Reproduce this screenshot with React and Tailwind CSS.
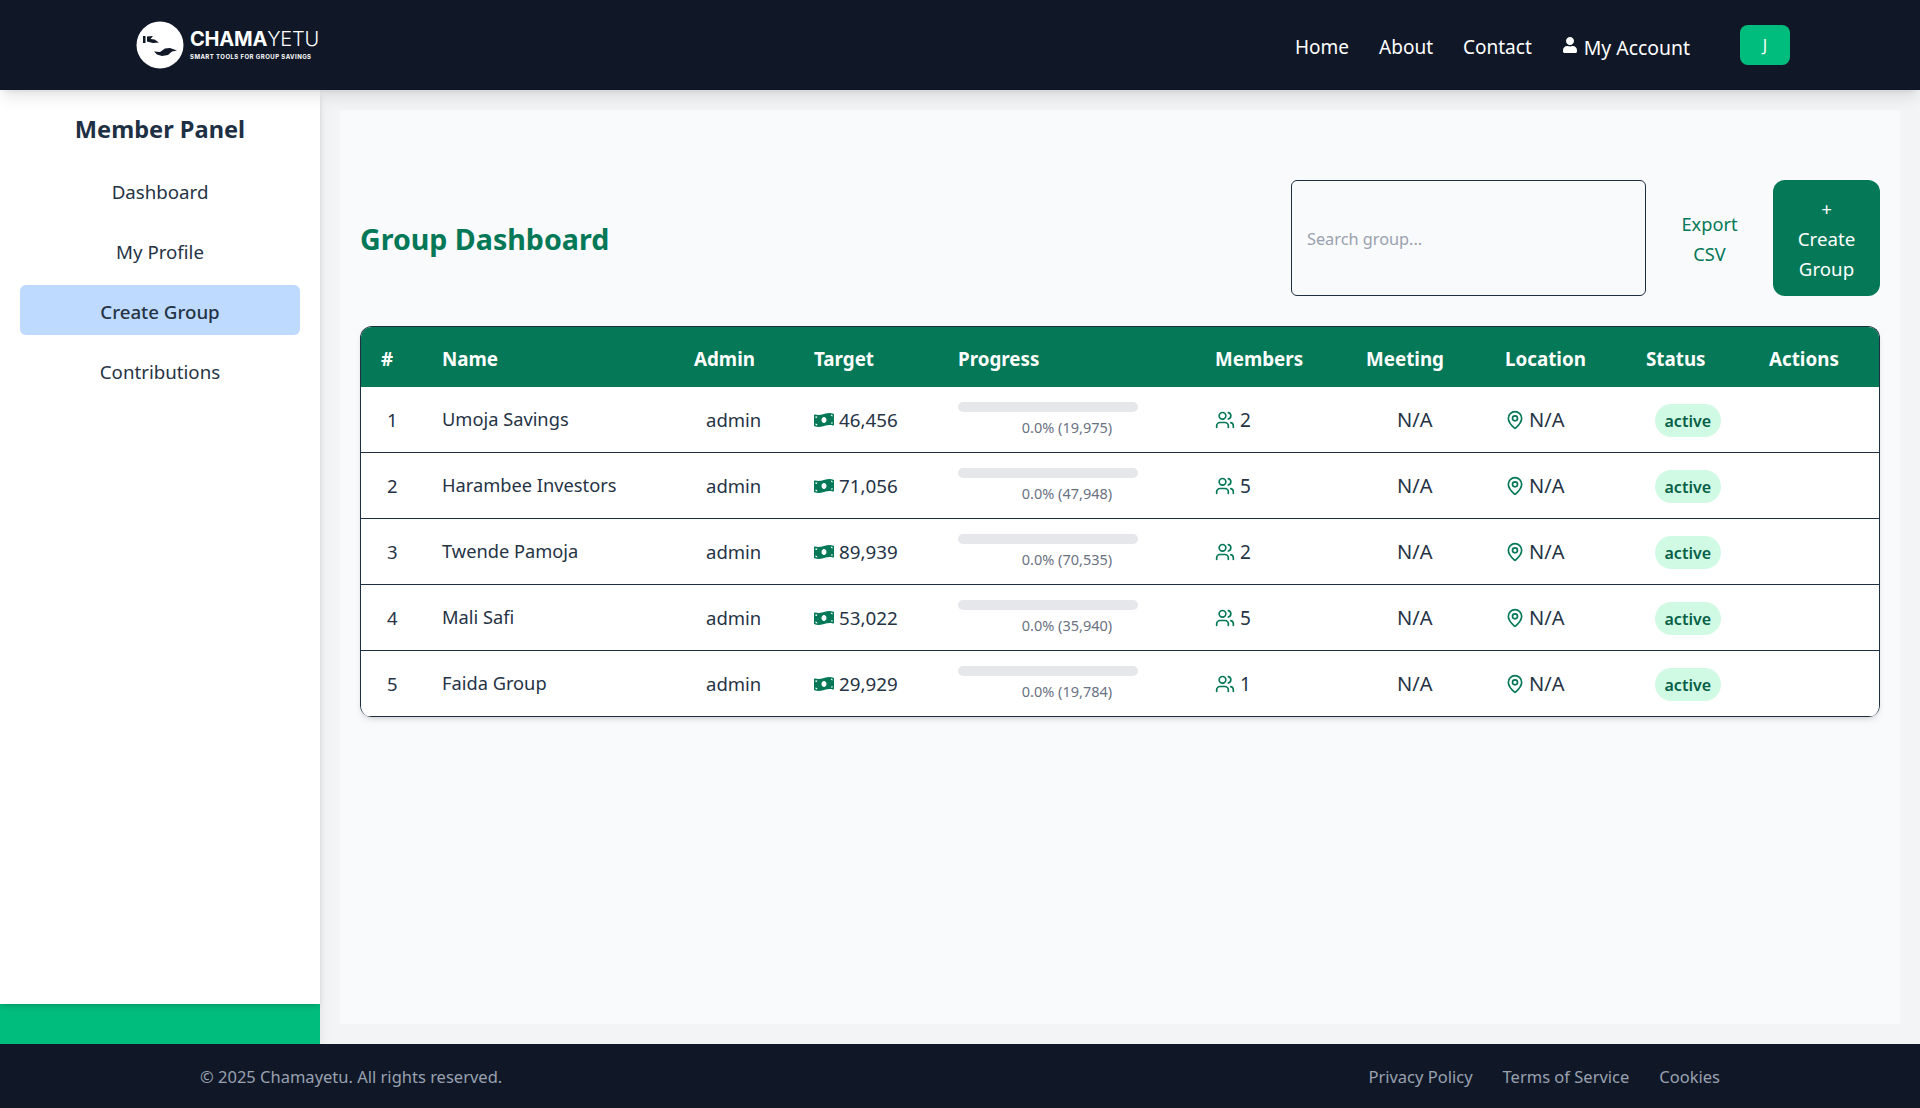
import { FaMoneyBillWave, FaUser } from "react-icons/fa";
import { LuUsers, LuMapPin } from "react-icons/lu";

const groups = [
  { id: 1, name: "Umoja Savings", target: "46,456", raised: "19,975", members: 2 },
  { id: 2, name: "Harambee Investors", target: "71,056", raised: "47,948", members: 5 },
  { id: 3, name: "Twende Pamoja", target: "89,939", raised: "70,535", members: 2 },
  { id: 4, name: "Mali Safi", target: "53,022", raised: "35,940", members: 5 },
  { id: 5, name: "Faida Group", target: "29,929", raised: "19,784", members: 1 },
];

const navLinks = ["Home", "About", "Contact"];
const sideLinks = ["Dashboard", "My Profile", "Create Group", "Contributions"];
const columns = ["#", "Name", "Admin", "Target", "Progress", "Members", "Meeting", "Location", "Status", "Actions"];
const footerLinks = ["Privacy Policy", "Terms of Service", "Cookies"];

function Logo() {
  return (
    <div className="flex items-center gap-[6px]">
      <svg className="h-12 w-12" viewBox="0 0 48 48">
        <circle cx="24" cy="24" r="23.5" fill="#fff" />
        {/* upper hand, cuff on the left */}
        <path d="M7 15h2.500v7H7z M11 15.500l6-.500-2.500 3 4 .500 4.500 3-6 .500-6-1.500z" fill="#111827" />
        {/* lower hand, open palm */}
        <path d="M18 30.500l6 .500 5-3.500 5-.500 7 2.500-5 1-4 3.500-6 1-5-1.500z" fill="#111827" />
      </svg>
      <div className="mb-[2px] flex flex-col font-['Inter',sans-serif] text-white">
        <div className="text-[20px] leading-[22px] font-bold tracking-[-0.2px]">
          CHAMA<span className="font-light">YETU</span>
        </div>
        <div className="text-[6px] leading-[8px] mt-[3px] font-bold tracking-[0.45px]">SMART TOOLS FOR GROUP SAVINGS</div>
      </div>
    </div>
  );
}

function GroupRow({ group }) {
  return (
    <tr className="h-[66px] bg-white text-[18.500px] text-[#253345] [&>td]:border-b [&>td]:border-[#1f2f42]">
      <td className="pl-[26px] pt-[1px]">{group.id}</td>
      <td className="pl-5 pb-[2px] text-[18.250px]">{group.name}</td>
      <td className="pl-[32px] pt-[1px]">admin</td>
      <td className="pl-5 pt-[1px]">
        <span className="flex items-center gap-[5px]">
          <FaMoneyBillWave className="h-[20px] w-[20px] text-[#047857]" />
          <span className="text-[18.800px]">{group.target}</span>
        </span>
      </td>
      <td className="pl-5">
        <div className="w-[218px]">
          <div className="h-[10px] w-[180px] rounded-full bg-gray-200" />
          <div className="mt-[5px] text-center text-[14.500px] leading-5 text-gray-500">0.0% ({group.raised})</div>
        </div>
      </td>
      <td className="pl-5 pt-[1px]">
        <span className="flex items-center gap-[5px]">
          <LuUsers className="h-5 w-5 text-[#047857]" />
          <span className="text-[19px]">{group.members}</span>
        </span>
      </td>
      <td className="pl-[51px] pt-[1px] text-[20px]">N/A</td>
      <td className="pl-5 pt-[1px]">
        <span className="flex items-center gap-[4px]">
          <LuMapPin className="h-5 w-5 text-[#047857]" />
          <span className="text-[20px]">N/A</span>
        </span>
      </td>
      <td className="pl-[29px] pt-[1px]">
        <span className="inline-block h-[33px] rounded-[17px] bg-[#d1fae5] px-[9.500px] text-[16px] leading-[35px] font-semibold text-[#065f46]">
          active
        </span>
      </td>
      <td />
    </tr>
  );
}

export default function App() {
  return (
    <div className="flex h-screen flex-col bg-gray-100 font-['Noto_Sans',sans-serif]">
      <header className="relative z-10 flex h-[90px] shrink-0 items-center bg-gray-900 pr-[130px] pl-[136px] shadow-lg">
        <Logo />
        <nav className="ml-auto flex items-center text-[19px] text-white">
          <div className="flex items-center gap-[30px] pt-[5px]">
            {navLinks.map((link) => (
              <a key={link}>{link}</a>
            ))}
            <a className="flex items-center gap-[6px]">
              <FaUser className="mb-[5px] h-[16px] w-[16px]" />
              <span className="text-[19.400px]">My Account</span>
            </a>
          </div>
          <button className="ml-[50px] h-10 w-[50px] rounded-lg bg-emerald-500 text-[16px]">J</button>
        </nav>
      </header>

      <div className="flex min-h-0 flex-1">
        <aside className="flex w-[320px] shrink-0 flex-col bg-white shadow-lg">
          <div className="relative flex-1 bg-white px-5 pt-[23px] shadow-md">
            <h2 className="text-center text-[23.600px] leading-8 font-bold text-[#1e3044]">Member Panel</h2>
            <ul className="mt-[20px] flex flex-col gap-[10px] text-[18.700px] text-[#253345]">
              {sideLinks.map((link) => (
                <li
                  key={link}
                  className={
                    link === "Create Group"
                      ? "h-[50px] rounded-md bg-blue-200 pt-[13px] text-center leading-7 font-medium"
                      : "h-[50px] pt-[13px] text-center leading-7"
                  }
                >
                  {link}
                </li>
              ))}
            </ul>
          </div>
          <div className="h-10 bg-emerald-500" />
        </aside>

        <main className="min-w-0 flex-1 p-5">
          <div className="h-full bg-gray-50 px-5 pt-[70px]">
            <div className="flex h-[116px] items-center">
              <h1 className="pt-[2px] text-[28.600px] font-bold text-[#047857]">Group Dashboard</h1>
              <div className="ml-auto flex h-full items-stretch">
                <input
                  className="w-[355px] rounded-md border border-[#1f2f42] px-[15px] pt-[2px] text-[16.300px] placeholder:text-gray-400"
                  placeholder="Search group..."
                />
                <button className="w-[127px] pt-[2px] text-center text-[18.200px] leading-[30px] text-[#047857]">
                  Export<br />CSV
                </button>
                <button className="w-[107px] rounded-xl bg-[#047857] pt-[2px] text-center text-[18.700px] leading-[30px] text-white">
                  +<br />Create<br />Group
                </button>
              </div>
            </div>

            <div className="mt-[30px] overflow-hidden rounded-xl border-x border-t border-[#1f2f42] shadow-md">
              <table className="w-full table-fixed border-separate border-spacing-0">
                <colgroup>
                  <col className="w-[61px]" />
                  <col className="w-[252px]" />
                  <col className="w-[120px]" />
                  <col className="w-[144px]" />
                  <col className="w-[257px]" />
                  <col className="w-[151px]" />
                  <col className="w-[139px]" />
                  <col className="w-[141px]" />
                  <col className="w-[123px]" />
                  <col />
                </colgroup>
                <thead>
                  <tr className="h-[60px] bg-[#047857] text-[18.800px] text-white">
                    {columns.map((col) => (
                      <th key={col} className="pt-[4px] pl-5 text-left font-bold">{col}</th>
                    ))}
                  </tr>
                </thead>
                <tbody>
                  {groups.map((group) => (
                    <GroupRow key={group.id} group={group} />
                  ))}
                </tbody>
              </table>
            </div>
          </div>
        </main>
      </div>

      <footer className="flex h-16 shrink-0 items-center justify-between bg-gray-900 px-[200px] pt-[2px] text-[16.500px] text-gray-400">
        <span>© 2025 Chamayetu. All rights reserved.</span>
        <div className="flex gap-[30px]">
          {footerLinks.map((link) => (
            <a key={link}>{link}</a>
          ))}
        </div>
      </footer>
    </div>
  );
}
